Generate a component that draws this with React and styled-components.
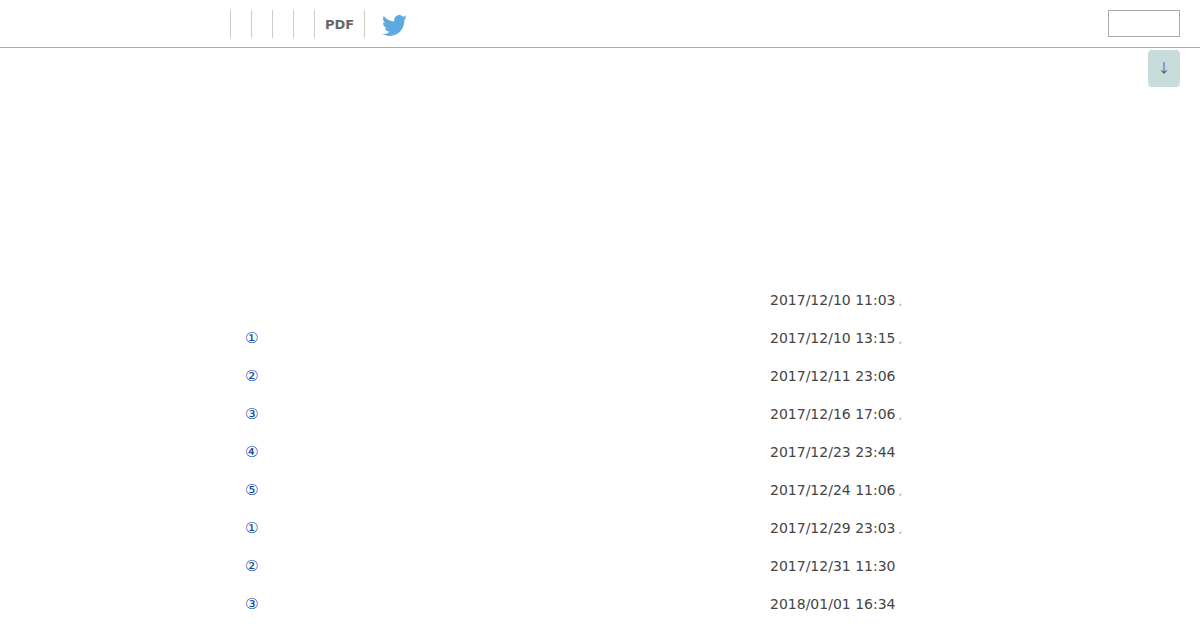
import React from "react";
import styled, { createGlobalStyle } from "styled-components";

const GlobalStyle = createGlobalStyle`
  html, body {
    margin: 0;
    padding: 0;
    background: #fff;
    font-family: "DejaVu Sans", sans-serif;
  }
`;

const Page = styled.div`
  width: 1200px;
  height: 630px;
  overflow: hidden;
`;

const Header = styled.header`
  box-sizing: border-box;
  height: 48px;
  padding: 10px 20px 0 230px;
  display: flex;
  align-items: flex-start;
  border-bottom: 1px solid #aaa;
`;

const NavCell = styled.div`
  box-sizing: border-box;
  width: ${(p) => p.$width}px;
  height: 28px;
  border-left: 1px solid #ccc;
  font-size: 13px;
  font-weight: 700;
  color: #666;
  line-height: 29px;
  padding-left: 10px;
`;

const TwitterLink = styled.a`
  margin-left: 7px;
  margin-top: 5px;
  display: block;
  line-height: 0;
`;

const SearchBox = styled.input`
  box-sizing: border-box;
  width: 72px;
  height: 27px;
  margin-left: auto;
  border: 1px solid #aaa;
  background: #fff;
  padding: 0;
`;

const ScrollRow = styled.div`
  height: 233px;
  display: flex;
  justify-content: flex-end;
  padding: 2px 20px 0 0;
  box-sizing: border-box;
`;

const ScrollButton = styled.div`
  width: 32px;
  height: 37px;
  border-radius: 4px;
  background: #c9dcdc;
  color: #555;
  font-family: "Noto Sans CJK JP", sans-serif;
  font-size: 13px;
  line-height: 33px;
  text-align: center;
`;

const List = styled.ul`
  list-style: none;
  margin: 0;
  padding: 0 0 0 245px;
`;

const Row = styled.li`
  height: 38px;
  display: flex;
  align-items: center;
`;

const Title = styled.span`
  width: 525px;
  color: #0f3fa8;
  font-size: 15px;
  line-height: 20px;
`;

const Date = styled.span`
  width: 129px;
  color: #444;
  font-size: 14px;
  white-space: nowrap;
`;

const Mark = styled.span`
  color: #666;
  font-size: 8px;
  position: relative;
  top: 2px;
`;

const rows = [
  { title: "", date: "2017/12/10 11:03", mark: true },
  { title: "①", date: "2017/12/10 13:15", mark: true },
  { title: "②", date: "2017/12/11 23:06" },
  { title: "③", date: "2017/12/16 17:06", mark: true },
  { title: "④", date: "2017/12/23 23:44" },
  { title: "⑤", date: "2017/12/24 11:06", mark: true },
  { title: "①", date: "2017/12/29 23:03", mark: true },
  { title: "②", date: "2017/12/31 11:30" },
  { title: "③", date: "2018/01/01 16:34" },
];

function TwitterBird() {
  return (
    <svg width="25" height="22" viewBox="0 0 24 20" preserveAspectRatio="none">
      <path
        fill="#5ea9dd"
        d="M24 2.4c-.9.4-1.8.7-2.8.8 1-.6 1.8-1.6 2.2-2.7-1 .6-2 1-3.1 1.2C19.3.7 18 0 16.6 0c-2.7 0-4.9 2.2-4.9 4.9 0 .4 0 .8.1 1.1C7.7 5.8 4.1 3.9 1.7.9c-.4.7-.7 1.6-.7 2.5 0 1.7.9 3.2 2.2 4.1-.8 0-1.6-.2-2.2-.6v.1c0 2.4 1.7 4.4 3.9 4.8-.4.1-.8.2-1.3.2-.3 0-.6 0-.9-.1.6 2 2.4 3.4 4.6 3.4-1.7 1.3-3.8 2.1-6.1 2.1-.4 0-.8 0-1.2-.1C2.2 18.3 4.8 19 7.5 19c9.1 0 14-7.5 14-14v-.6c1-.7 1.8-1.6 2.5-2z"
      />
    </svg>
  );
}

export default function App() {
  return (
    <Page>
      <GlobalStyle />
      <Header>
        <NavCell $width={21} />
        <NavCell $width={21} />
        <NavCell $width={21} />
        <NavCell $width={21} />
        <NavCell $width={50}>PDF</NavCell>
        <NavCell $width={1} />
        <TwitterLink>
          <TwitterBird />
        </TwitterLink>
        <SearchBox />
      </Header>
      <ScrollRow>
        <ScrollButton>↓</ScrollButton>
      </ScrollRow>
      <List>
        {rows.map((row, i) => (
          <Row key={i}>
            <Title>{row.title}</Title>
            <Date>{row.date}</Date>
            {row.mark && <Mark>,</Mark>}
          </Row>
        ))}
      </List>
    </Page>
  );
}
